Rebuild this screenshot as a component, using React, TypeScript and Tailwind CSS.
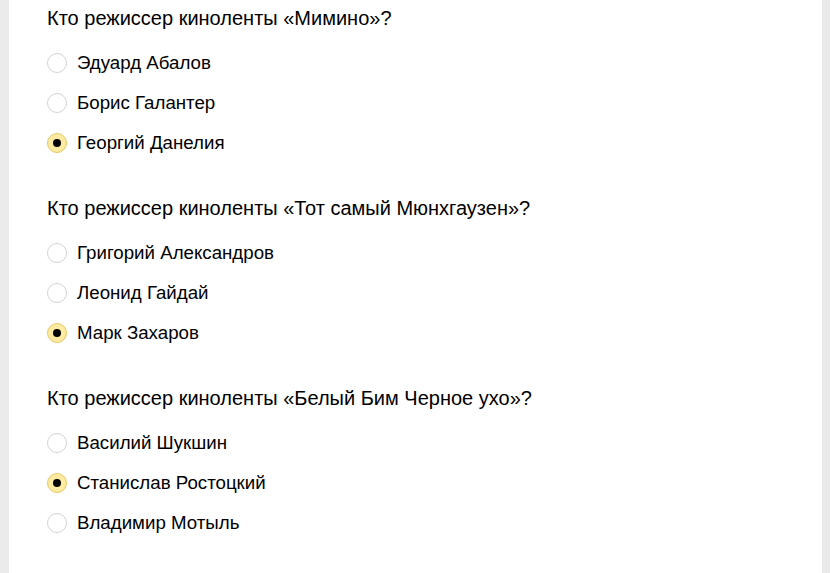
const QUIZ = [
  {
    q: 'Кто режиссер киноленты «Мимино»?',
    options: ['Эдуард Абалов', 'Борис Галантер', 'Георгий Данелия'],
    picked: 2,
  },
  {
    q: 'Кто режиссер киноленты «Тот самый Мюнхгаузен»?',
    options: ['Григорий Александров', 'Леонид Гайдай', 'Марк Захаров'],
    picked: 2,
  },
  {
    q: 'Кто режиссер киноленты «Белый Бим Черное ухо»?',
    options: ['Василий Шукшин', 'Станислав Ростоцкий', 'Владимир Мотыль'],
    picked: 1,
  },
];

function Radio({ checked }: { checked: boolean }) {
  return checked ? (
    <span className="grid h-5 w-5 shrink-0 place-items-center rounded-full border border-[#e6c868] bg-[#feeaa0]">
      <span className="h-[8px] w-[8px] rounded-full bg-black" />
    </span>
  ) : (
    <span className="h-5 w-5 shrink-0 rounded-full border border-[#d3d3d3] bg-white" />
  );
}

export default function App() {
  return (
    <div className="flex h-screen w-full font-['Liberation_Sans',Arial,sans-serif] text-black">
      <div className="w-[9px] bg-[#ebebeb]" />
      <main className="flex-1 bg-white pl-[38px] pt-[6px]">
        {QUIZ.map((item, i) => (
          <section key={i} className="mb-[33px]">
            <div className="h-6 text-[20px] leading-6">{item.q}</div>
            <div className="mt-[13px]">
              {item.options.map((opt, j) => (
                <label key={j} className="flex h-10 items-center">
                  <Radio checked={j === item.picked} />
                  <span className="ml-[10px] text-[18.7px] leading-6">{opt}</span>
                </label>
              ))}
            </div>
          </section>
        ))}
      </main>
      <div className="w-[8px] bg-[#e9e9e9]" />
      <div className="w-px bg-white" />
    </div>
  );
}
